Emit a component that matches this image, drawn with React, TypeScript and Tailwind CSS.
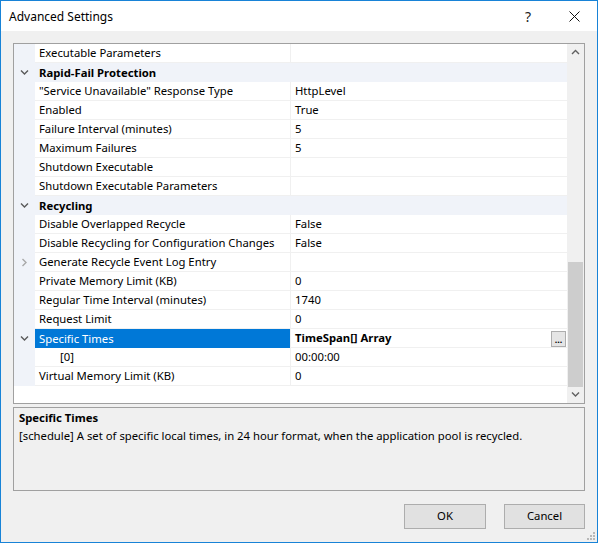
import React from "react";

type Row = {
  name: string;
  value?: string;
  kind?: "cat" | "prop";
  chevron?: "open" | "closed";
  selected?: boolean;
  indent?: boolean;
  boldValue?: boolean;
  button?: boolean;
};

const rows: Row[] = [
  { name: "Executable Parameters" },
  { name: "Rapid-Fail Protection", kind: "cat", chevron: "open" },
  { name: "\"Service Unavailable\" Response Type", value: "HttpLevel" },
  { name: "Enabled", value: "True" },
  { name: "Failure Interval (minutes)", value: "5" },
  { name: "Maximum Failures", value: "5" },
  { name: "Shutdown Executable" },
  { name: "Shutdown Executable Parameters" },
  { name: "Recycling", kind: "cat", chevron: "open" },
  { name: "Disable Overlapped Recycle", value: "False" },
  { name: "Disable Recycling for Configuration Changes", value: "False" },
  { name: "Generate Recycle Event Log Entry", chevron: "closed" },
  { name: "Private Memory Limit (KB)", value: "0" },
  { name: "Regular Time Interval (minutes)", value: "1740" },
  { name: "Request Limit", value: "0" },
  { name: "Specific Times", value: "TimeSpan[] Array", chevron: "open", selected: true, boldValue: true, button: true },
  { name: "[0]", value: "00:00:00", indent: true },
  { name: "Virtual Memory Limit (KB)", value: "0" },
];

function Chevron({ dir, color }: { dir: "down" | "right" | "up"; color: string }) {
  const d =
    dir === "down" ? "M1 2.5 L4.5 6 L8 2.5" : dir === "up" ? "M1 6 L4.5 2.5 L8 6" : "M2.5 1 L6 4.5 L2.5 8";
  return (
    <svg width="9" height="9" viewBox="0 0 9 9" fill="none">
      <path d={d} stroke={color} strokeWidth="1.4" />
    </svg>
  );
}

function GridRow({ row }: { row: Row }) {
  const gutter = (
    <div className="w-[21px] h-full bg-[#f0f3f9] flex items-center justify-center shrink-0">
      {row.chevron === "open" && <Chevron dir="down" color="#5a5a5a" />}
      {row.chevron === "closed" && <Chevron dir="right" color="#a8a8a8" />}
    </div>
  );

  if (row.kind === "cat") {
    return (
      <div className="h-[19px] flex">
        {gutter}
        <div className="flex-1 bg-[#f0f3f9] pl-[4px] pt-[1px] flex items-center font-bold text-black">{row.name}</div>
      </div>
    );
  }

  return (
    <div className="h-[19px] flex">
      {gutter}
      <div
        className={
          row.selected
            ? "w-[255px] shrink-0 bg-[#0078d7] text-white flex items-center pl-[4px] pt-[1px]"
            : "w-[255px] shrink-0 border-b border-[#f0f0f0] flex items-center pl-[4px] pt-[1px] text-black"
        }
      >
        <span className={row.indent ? "pl-[21px]" : ""}>{row.name}</span>
      </div>
      <div className="flex-1 border-l border-[#f0f0f0] border-b flex items-center pl-[4px] pr-[1px] pt-[1px] text-black">
        <span className={row.boldValue ? "font-bold flex-1" : "flex-1"}>{row.value}</span>
        {row.button && (
          <div className="w-[15px] h-[16px] border border-[#adadad] bg-[#e5e5e5] flex items-end justify-center text-[9px] leading-[12px] font-bold">
            ...
          </div>
        )}
      </div>
    </div>
  );
}

export default function App() {
  return (
    <div
      className="w-[598px] h-[543px] bg-[#f0f0f0] border border-[#1883d7] flex flex-col text-[11.3px] text-black relative"
      style={{ fontFamily: "'Noto Sans', 'Liberation Sans', sans-serif" }}
    >
      {/* title bar */}
      <div className="h-[30px] bg-white flex items-center shrink-0 pt-[1px]">
        <span className="pl-[8px] flex-1 text-[12px]">Advanced Settings</span>
        <span className="w-[46px] text-center text-[14px] text-[#222]">?</span>
        <div className="w-[46px] flex justify-center">
          <svg width="11" height="11" viewBox="0 0 11 11">
            <path d="M0.5 0.5 L10.5 10.5 M10.5 0.5 L0.5 10.5" stroke="#111" strokeWidth="1" />
          </svg>
        </div>
      </div>

      <div className="flex-1 flex flex-col px-[12px] pt-[12px]">
        {/* property grid */}
        <div className="h-[361px] border border-[#a0a0a0] bg-white flex">
          <div className="flex-1 flex flex-col">
            {rows.map((r, i) => (
              <GridRow key={i} row={r} />
            ))}
          </div>
          <div className="w-[17px] bg-[#f0f0f0] flex flex-col">
            <div className="h-[17px] flex items-center justify-center">
              <Chevron dir="up" color="#606060" />
            </div>
            <div className="flex-1 flex flex-col px-[1px]">
              <div className="mt-[201px] h-[125px] bg-[#cdcdcd]" />
            </div>
            <div className="h-[17px] flex items-center justify-center">
              <Chevron dir="down" color="#606060" />
            </div>
          </div>
        </div>

        {/* description */}
        <div className="mt-[3px] h-[84px] border border-[#a0a0a0] bg-[#f0f0f0] px-[5px] pt-[1px] leading-[18px]">
          <div className="font-bold">Specific Times</div>
          <div>[schedule] A set of specific local times, in 24 hour format, when the application pool is recycled.</div>
        </div>

        {/* buttons */}
        <div className="mt-[13px] flex justify-end gap-[18px]">
          <button className="w-[82px] h-[25px] bg-[#e1e1e1] border border-[#adadad]">OK</button>
          <button className="w-[81px] h-[25px] bg-[#e1e1e1] border border-[#adadad]">Cancel</button>
        </div>
      </div>

      {/* size grip */}
      <svg className="absolute right-[1px] bottom-[1px]" width="10" height="10" viewBox="0 0 10 10">
        <rect x="7" y="1" width="2" height="2" fill="#b8b8b8" />
        <rect x="4" y="4" width="2" height="2" fill="#b8b8b8" />
        <rect x="7" y="4" width="2" height="2" fill="#b8b8b8" />
        <rect x="1" y="7" width="2" height="2" fill="#b8b8b8" />
        <rect x="4" y="7" width="2" height="2" fill="#b8b8b8" />
        <rect x="7" y="7" width="2" height="2" fill="#b8b8b8" />
      </svg>
    </div>
  );
}
